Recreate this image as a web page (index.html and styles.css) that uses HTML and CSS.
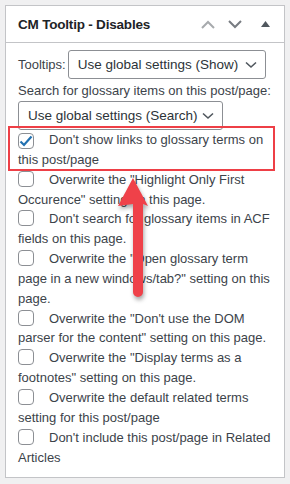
FILE: index.html
```html
<!DOCTYPE html>
<html lang="en">
<head>
<meta charset="UTF-8">
<meta name="viewport" content="width=device-width, initial-scale=1.0">
<title>CM Tooltip - Disables</title>
<link rel="stylesheet" href="styles.css">
</head>
<body>
<div class="postbox">
  <div class="postbox-header">
    <h2>CM Tooltip - Disables</h2>
    <div class="handle-actions">
      <span class="handle up">
        <svg width="14" height="9" viewBox="0 0 14 9"><path d="M1 8 L7 2 L13 8" fill="none" stroke="currentColor" stroke-width="2"/></svg>
      </span>
      <span class="handle down">
        <svg width="14" height="9" viewBox="0 0 14 9"><path d="M1 1 L7 7 L13 1" fill="none" stroke="currentColor" stroke-width="2"/></svg>
      </span>
      <span class="handle toggle">
        <svg width="9" height="6" viewBox="0 0 9 6"><path d="M0 6 L4.5 0 L9 6 Z" fill="currentColor"/></svg>
      </span>
    </div>
  </div>

  <div class="inside">
    <div class="row">
      <label>Tooltips:</label>
      <div class="select select-show">
        <span>Use global settings (Show)</span>
        <svg width="12" height="8" viewBox="0 0 12 8"><path d="M1 1.5 L6 6 L11 1.5" fill="none" stroke="currentColor" stroke-width="1.6"/></svg>
      </div>
    </div>

    <p class="field-label">Search for glossary items on this post/page:</p>
    <div class="select select-search">
      <span>Use global settings (Search)</span>
      <svg width="12" height="8" viewBox="0 0 12 8"><path d="M1 1.5 L6 6 L11 1.5" fill="none" stroke="currentColor" stroke-width="1.6"/></svg>
    </div>

    <div class="options">
      <p><span class="checkbox checked"><svg width="14" height="12" viewBox="0 0 14 12"><path d="M1.5 6.5 L5 10 L12.5 1.5" fill="none" stroke="currentColor" stroke-width="2.2"/></svg></span>Don't show links to glossary terms on this post/page</p>
      <p><span class="checkbox"></span>Overwrite the "Highlight Only First Occurence" setting on this page.</p>
      <p><span class="checkbox"></span>Don't search for glossary items in ACF fields on this page.</p>
      <p><span class="checkbox"></span>Overwrite the "Open glossary term page in a new windows/tab?" setting on this page.</p>
      <p><span class="checkbox"></span>Overwrite the "Don't use the DOM parser for the content" setting on this page.</p>
      <p><span class="checkbox"></span>Overwrite the "Display terms as a footnotes" setting on this page.</p>
      <p><span class="checkbox"></span>Overwrite the default related terms setting for this post/page</p>
      <p><span class="checkbox"></span>Don't include this post/page in Related Articles</p>
    </div>
  </div>
</div>

<!-- annotation drawn over the screenshot -->
<div class="highlight-box"></div>
<svg class="arrow" width="44" height="130" viewBox="0 0 44 130">
  <path d="M17 116 L17 28 L2 30 L17 2 L32 30 L27 28 L27 116 A5 5 0 0 1 17 116 Z" fill="#ef4149"/>
</svg>
</body>
</html>
```

FILE: styles.css
```css
body {
  margin: 0;
  padding: 5px;
  background-color: #f0f0f1;
  font-family: "Liberation Sans", Arial, sans-serif;
  font-size: 13px;
  color: #3c434a;
}

.postbox {
  width: 278px;
  background-color: #fff;
  border: 1px solid #c3c4c7;
}

.postbox-header {
  display: flex;
  align-items: center;
  justify-content: space-between;
  height: 36px;
  border-bottom: 1px solid #c3c4c7;
}

.postbox-header h2 {
  margin: 0;
  padding-left: 12px;
  font-size: 13.5px;
  font-weight: 700;
  letter-spacing: -0.2px;
  color: #1d2327;
}

.handle-actions {
  display: flex;
  align-items: center;
  padding-right: 12px;
}

.handle {
  display: flex;
  justify-content: center;
  width: 27px;
}

.handle.up {
  color: #a7aaad;
}

.handle.down {
  color: #787c82;
}

.handle.toggle {
  width: 14px;
  margin-left: 10px;
  color: #50575e;
}

.inside {
  padding: 7px 12px 10px;
}

.row {
  display: flex;
  align-items: center;
  gap: 2px;
}

.select {
  display: inline-flex;
  align-items: center;
  justify-content: space-between;
  box-sizing: border-box;
  height: 29px;
  padding: 0 8px 0 9px;
  border: 1px solid #8c8f94;
  border-radius: 3px;
  color: #2c3338;
  font-size: 13.5px;
  white-space: nowrap;
}

.select svg {
  flex-shrink: 0;
  color: #50575e;
}

.select-show {
  width: 198px;
}

.select-search {
  width: 205px;
}

.field-label {
  margin: 2px 0 0;
  line-height: 20px;
}

.options {
  margin-top: 0;
}

.options p {
  margin: 0;
  line-height: 19.85px;
}

.checkbox {
  display: inline-flex;
  align-items: center;
  justify-content: center;
  box-sizing: border-box;
  width: 16px;
  height: 16px;
  margin-right: 15px;
  vertical-align: -3px;
  border: 1px solid #8c8f94;
  border-radius: 4px;
  background-color: #fff;
}

.checkbox.checked {
  color: #2271b1;
}

.highlight-box {
  position: absolute;
  left: 8px;
  top: 126px;
  width: 263px;
  height: 41px;
  border: 2px solid #ee3f46;
}

.arrow {
  position: absolute;
  left: 116px;
  top: 176px;
  filter: drop-shadow(1px 3px 2px rgba(0, 0, 0, 0.35));
}
```
